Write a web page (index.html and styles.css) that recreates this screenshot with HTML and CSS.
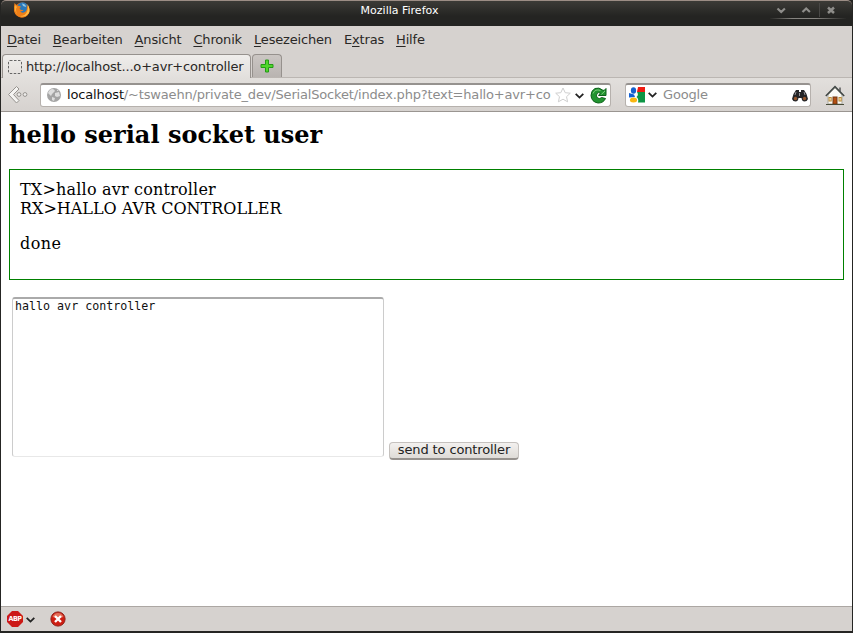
FILE: index.html
```html
<!DOCTYPE html>
<html lang="de">
<head>
<meta charset="utf-8">
<title>Mozilla Firefox</title>
<link rel="stylesheet" href="styles.css">
</head>
<body>
<div class="window">
  <header class="titlebar">
    <svg class="fox" width="18" height="18" viewBox="0 0 18 18">
      <circle cx="9" cy="9" r="7.6" fill="#e66a10"/>
      <circle cx="9.6" cy="7" r="5.7" fill="#2b78b8"/>
      <path d="M9 2.500Q13 3 13 6L10 5Z" fill="#8fc7e5"/>
      <path d="M1.500 2L4 4.500L8 5.500L6.500 7.500L8 9L10.500 9Q9 11 7 10Q9 13 12 11Q15 9 13.500 4Q17.500 8 16 12Q13 17.500 7 16.300Q0 14 1 6Z" fill="#ef7f18"/>
      <path d="M14.500 3Q18 9 15.500 12.500Q12 17 7 15Q13 15 14.300 10Q15.500 7 14.500 3Z" fill="#ffbd45"/>
      <path d="M2 4Q1 9 4 13Q2 8 4 6Z" fill="#f9b23b"/>
    </svg>
    <span class="title">Mozilla Firefox</span>
    <div class="controls">
      <svg width="70" height="17" viewBox="0 0 70 17" fill="none">
        <path d="M7.500 7.500L11.200 11L14.900 7.500M32.500 11L36.200 7.500L39.900 11" stroke="#8e8d8a" stroke-width="2.200"/>
        <path d="M58 6.500L64 12M64 6.500L58 12" stroke="#8e8d8a" stroke-width="2.500"/>
        <path d="M49.500 2V16" stroke="#484745"/>
      </svg>
    </div>
  </header>
  <nav class="menu">
    <span><u>D</u>atei</span><span><u>B</u>earbeiten</span><span><u>A</u>nsicht</span><span><u>C</u>hronik</span><span><u>L</u>esezeichen</span><span>E<u>x</u>tras</span><span><u>H</u>ilfe</span>
  </nav>
  <div class="tabs">
    <div class="tab">
      <svg width="14" height="14" viewBox="0 0 14 14"><rect x=".5" y=".5" width="13" height="13" rx="1.500" fill="none" stroke="#666" stroke-dasharray="2.500 1.500"/></svg>
      <span>http://localhost...o+avr+controller</span>
    </div>
    <div class="newtab">
      <svg width="14" height="14" viewBox="0 0 14 14"><path d="M5.500 1h3v4.500H13v3H8.500V13h-3V8.500H1v-3h4.500z" fill="#4fd62b" stroke="#249a16" stroke-linejoin="round"/></svg>
    </div>
  </div>
  <div class="toolbar">
    <svg class="back" width="22" height="20" viewBox="0 0 22 20">
      <path d="M9.500 1.500L1.500 9.500L9.500 18L12 15.500L6.500 9.500L12 4Z" fill="#f5f4f2" stroke="#96938f" stroke-linejoin="round"/>
      <circle cx="12" cy="9.500" r="1.900" fill="#eeedeb" stroke="#96938f"/><circle cx="18" cy="9.500" r="1.900" fill="#eeedeb" stroke="#96938f"/>
    </svg>
    <div class="field address">
      <svg class="globe" width="14" height="14" viewBox="0 0 14 14"><circle cx="7" cy="7" r="7" fill="#a4a4a4"/><path d="M2 3Q4 0 7 1.500L8 3L5 6L4 8L1 5ZM8 5L12 4L13 8L10 9L8 8ZM5 9L8 10L7 13L5 12ZM10 1.500L12 3L10 3Z" fill="#dedede"/></svg>
      <span class="url"><b>localhost</b>/~tswaehn/private_dev/SerialSocket/index.php?text=hallo+avr+co</span>
      <svg class="star" width="16" height="16" viewBox="0 0 16 16"><path d="M8 1L10.200 5.700L15.300 6.200L11.500 9.700L12.600 14.800L8 12.200L3.400 14.800L4.500 9.700L.7 6.200L5.800 5.700Z" fill="#fff" stroke="#cfcfcf" stroke-linejoin="round"/></svg>
      <svg class="chev" width="9" height="6" viewBox="0 0 9 6"><path d="M.7.800L4.500 4.600L8.300.8" fill="none" stroke="#222" stroke-width="1.800"/></svg>
      <svg class="reload" width="17" height="17" viewBox="0 0 17 17"><path d="M12.500 3Q9 0 5 1.500Q1 3.500 1 8.500Q1.500 15 8 16Q13.500 16 15.500 11.500L11.500 10.500Q10 12.500 7.500 11Q5.500 9 7 6.500Q8.500 5 10.500 6L8.500 8.500H16V1.500L14 3.500Z" fill="#229431" stroke="#0c611a"/><path d="M3 6.500Q5 1.500 10.500 3.500M11.500 7.300L15 4" fill="none" stroke="#7bce7b"/></svg>
    </div>
    <div class="field search">
      <svg width="16" height="16" viewBox="0 0 16 16"><rect width="16" height="16" rx="1" fill="#fff"/><path d="M9 0H16V5H8Z" fill="#ef1b12"/><path d="M8 5H16V15.500H9Q10 12 7.500 10Q10 8 8 5Z" fill="#0d9545"/><path d="M0 6L5 7.500L6 10L0 10.500Z" fill="#1461d2"/><ellipse cx="4.500" cy="3.500" rx="2.600" ry="3.300" fill="#1660cc"/><ellipse cx="4.500" cy="13" rx="3.600" ry="2.500" fill="#f9b711"/></svg>
      <svg class="chev" width="9" height="6" viewBox="0 0 9 6"><path d="M.7.800L4.500 4.600L8.300.8" fill="none" stroke="#222" stroke-width="1.800"/></svg>
      <span class="hint">Google</span>
      <svg width="16" height="13" viewBox="0 0 16 13"><path d="M4 1H7V3H9V1H12L14.500 5L16 10Q15 12.500 12.500 12.500Q10 12.500 9.500 9H6.500Q6 12.500 3.500 12.500Q1 12.500 0 10L1.500 5Z" fill="#252527"/><circle cx="3.500" cy="9.500" r="1.700" fill="#95562c"/><circle cx="12.500" cy="9.500" r="1.700" fill="#95562c"/><path d="M4 3L3 6M12 3L13 6M7.500 4V7" stroke="#929298"/></svg>
    </div>
    <svg class="home" width="20" height="20" viewBox="0 0 20 20"><path d="M3 10L10 3L17 10V19H3Z" fill="#fafaf5" stroke="#aaa9a1"/><path d="M14 2.500H16V7L14 5Z" fill="#777"/><path d="M.8 11L10 1.500L19.200 11" fill="none" stroke="#3e4543" stroke-width="1.500"/><rect x="8" y="12" width="4" height="7" fill="#b54e10" stroke="#713914"/><rect x="4" y="12.500" width="2.200" height="3.500" fill="#f8e9bc" stroke="#bc8b38"/><rect x="14" y="12.500" width="2.200" height="3.500" fill="#f8e9bc" stroke="#bc8b38"/><path d="M1 19.500H19" stroke="#494c38"/></svg>
  </div>
  <main class="page">
    <h1>hello serial socket user</h1>
    <section class="log"><div class="tx">TX&gt;hallo avr controller</div><div>RX&gt;HALLO AVR CONTROLLER</div><p>done</p></section>
    <form class="send"><textarea spellcheck="false">hallo avr controller</textarea><button type="button">send to controller</button></form>
  </main>
  <footer class="status">
    <span class="abp">ABP</span>
    <svg class="chev" width="9" height="6" viewBox="0 0 9 6"><path d="M.7.800L4.500 4.600L8.300.8" fill="none" stroke="#222" stroke-width="1.800"/></svg>
    <svg class="stop" width="16" height="16" viewBox="0 0 16 16"><circle cx="8" cy="8" r="7.100" fill="#cf1e13" stroke="#902018"/><path d="M2.500 6Q4 2 8 2T13.500 6Q8 8 2.500 6" fill="#e5705a"/><path d="M5 5L11 11M11 5L5 11" stroke="#fff" stroke-width="2.400"/></svg>
  </footer>
</div>
</body>
</html>
```
FILE: styles.css
```css
* { box-sizing: border-box; }
body { margin: 0; background: #232321; font: 13px "DejaVu Sans", sans-serif; letter-spacing: -.17px; color: #2a2826; }
svg { display: block; flex: none; }
.window { width: 853px; height: 633px; border: solid #252523; border-width: 0 1px 2px; display: flex; flex-direction: column; overflow: hidden; }
.titlebar { height: 26px; flex: none; display: grid; grid-template-columns: 82px 1fr 82px; align-items: start; background: linear-gradient(#3c3b37, #242422 60%); border-top: 1px solid #9c8d85; border-radius: 5px 5px 0 0; }
.fox { margin: 0 0 0 12px; }
.title { text-align: center; color: #fff; font-size: 11px; letter-spacing: 0; line-height: 20px; margin-left: -54px; }
.controls { border-bottom: 1px solid; border-image: linear-gradient(90deg, transparent, #85837f 30%, #85837f 60%, transparent) 1; width: 76px; height: 18px; }
.menu { height: 28px; flex: none; background: #d6d2cf; display: flex; gap: 12px; padding: 0 6px; line-height: 27px; }
.menu u { text-underline-offset: 2px; text-decoration-thickness: 1px; }
.tabs { height: 24px; flex: none; display: flex; background: #d6d2cf; border-bottom: 1px solid #bbb6b2; padding-left: 1px; gap: 1px; }
.tab { width: 249px; height: 24px; display: flex; align-items: center; gap: 4px; padding-left: 5px; background: linear-gradient(#efedeb, #e2dfdc); border: 1px solid #96918d; border-bottom: 0; border-radius: 4px 4px 0 0; white-space: nowrap; }
.newtab { width: 30px; height: 23px; background: linear-gradient(#cbc6c3, #b9b4b1); border: 1px solid #96918d; border-bottom: 0; border-radius: 4px 4px 0 0; padding: 4px 7px; }
.toolbar { height: 34px; flex: none; display: flex; align-items: center; background: linear-gradient(#e2dfdc, #d6d2cf); border-bottom: 1px solid #9a9591; padding-left: 6px; }
.back { margin-right: 11px; }
.field { height: 24px; background: #fff; border: 1px solid #b6b1ad; border-top: 2px solid #96928f; border-radius: 3px; display: flex; align-items: center; }
.address { width: 571px; padding-left: 6px; }
.url { width: 484px; margin: 0 0 2px 6px; color: #8c8c8c; white-space: nowrap; }
.url b { font-weight: normal; color: #111; }
.star { margin-left: 4px; }
.address .chev { margin: 1px 6px 0 4px; }
.search { width: 186px; margin-left: 14px; padding: 0 2px 0 3px; }
.search .chev { margin: 0 6px 0 3px; }
.hint { flex: 1; padding-bottom: 2px; color: #8c8c8c; }
.home { margin-left: 14px; }
.page { flex: 1; background: #fff; padding: 8px; color: #000; font: 16px/19px "DejaVu Serif", serif; letter-spacing: 0; }
h1 { margin: 0; font-size: 24px; line-height: 29px; font-weight: bold; }
.log { height: 111px; margin-top: 20px; padding: 10px; border: 1px solid #008000; }
.tx { letter-spacing: .19px; }
.log p { margin: 16px 0; letter-spacing: .4px; }
.send { display: flex; align-items: flex-end; margin: 17px 0 0 3px; }
textarea { width: 372px; height: 160px; resize: none; border: 1px solid #ccc; border-top: 2px solid #aaa; border-bottom-color: #e8e8e8; border-radius: 3px; padding: 0 2px; outline: 0; font: 11.67px/14px "DejaVu Sans Mono", monospace; color: #111; }
button { width: 130px; height: 18px; margin: 0 0 -3px 5px; padding: 0 0 2px; border: 1px solid #c5c1be; border-bottom: 2px solid #96928e; border-radius: 4px; background: linear-gradient(#f3f1ef, #dedbd7); font: 13px/13px "DejaVu Sans", sans-serif; letter-spacing: -.13px; color: #222; }
.status { height: 25px; flex: none; background: #d6d2cf; border-top: 1px solid #aca7a3; display: flex; align-items: center; padding-left: 6px; }
.status .chev { margin: 1px 0 0 3px; }
.stop { margin-left: 15px; }
.abp { width: 16px; height: 16px; background: #cc1916; clip-path: polygon(5px 0, 11px 0, 16px 5px, 16px 11px, 11px 16px, 5px 16px, 0 11px, 0 5px); font: bold 7px/16px "DejaVu Sans Condensed", "DejaVu Sans", sans-serif; letter-spacing: -.4px; text-align: center; color: #fff; }
```
